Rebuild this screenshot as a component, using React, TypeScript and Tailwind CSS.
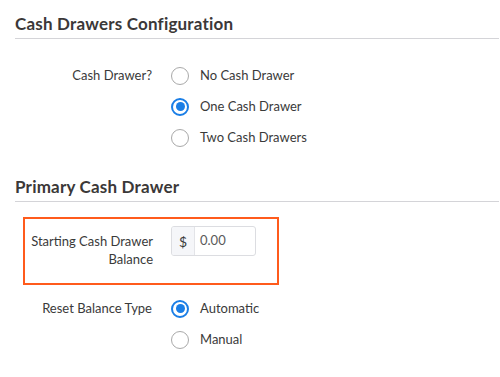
import React from "react";

function Radio({ checked, label }: { checked?: boolean; label: string }) {
  return (
    <div className="flex items-center h-[31px]">
      {checked ? (
        <span className="w-[18px] h-[18px] rounded-full border-2 border-[#1a7ee6] flex items-center justify-center shrink-0">
          <span className="w-[9px] h-[9px] rounded-full bg-[#1a7ee6]" />
        </span>
      ) : (
        <span className="w-[18px] h-[18px] rounded-full border-[1.5px] border-[#a9a9a9] shrink-0" />
      )}
      <span className="ml-[11px] text-[13px] text-[#3a3a3a]">{label}</span>
    </div>
  );
}

function Heading({ children }: { children: React.ReactNode }) {
  return (
    <div className="ml-[15px] mr-[1px] border-b border-[#d4d4d8] pb-[4px]">
      <h2 className="text-[17px] leading-[21px] font-bold text-[#3b3838] tracking-[0.2px]">{children}</h2>
    </div>
  );
}

export default function App() {
  return (
    <div
      className="w-[500px] h-[377px] bg-white overflow-hidden pt-[13px]"
      style={{ fontFamily: "Lato, 'Noto Sans', sans-serif" }}
    >
      <Heading>Cash Drawers Configuration</Heading>
      <div className="flex mt-[21px]">
        <div className="w-[152px] text-right text-[13px] text-[#3a3a3a] h-[31px] flex items-center justify-end">
          Cash Drawer?
        </div>
        <div className="ml-[19px] flex flex-col">
          <Radio label="No Cash Drawer" />
          <Radio checked label="One Cash Drawer" />
          <Radio label="Two Cash Drawers" />
        </div>
      </div>
      <div className="mt-[23px]">
        <Heading>Primary Cash Drawer</Heading>
      </div>
      <div className="ml-[23px] mt-[15px] w-[256px] h-[68px] border-2 border-[#ff5b1c] flex pt-[7px]">
        <div className="w-[128px] text-right text-[13px] text-[#3a3a3a] leading-[18px] pt-[6px]">
          Starting Cash Drawer Balance
        </div>
        <div className="ml-[18px] w-[85px] h-[30px] border border-[#dcdde1] rounded-[3px] flex overflow-hidden">
          <div className="w-[23px] bg-[#f5f6f9] border-r border-[#e3e4e8] flex items-center justify-center text-[14px] text-[#3a3a3a]">
            $
          </div>
          <div className="flex items-center pl-[5px] text-[13px] text-[#5a5a5a]">0.00</div>
        </div>
      </div>
      <div className="flex mt-[8px]">
        <div className="w-[152px] text-right text-[13px] text-[#3a3a3a] h-[31px] flex items-center justify-end">
          Reset Balance Type
        </div>
        <div className="ml-[19px] flex flex-col">
          <Radio checked label="Automatic" />
          <Radio label="Manual" />
        </div>
      </div>
    </div>
  );
}
